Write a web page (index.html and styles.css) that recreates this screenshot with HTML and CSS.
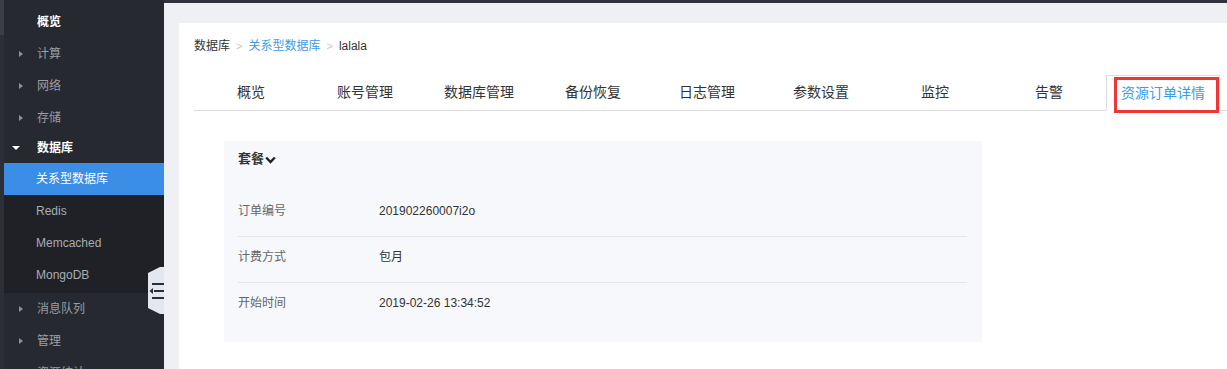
FILE: index.html
```html
<!DOCTYPE html>
<html lang="zh">
<head>
<meta charset="utf-8">
<title>资源订单详情</title>
<link rel="stylesheet" href="styles.css">
</head>
<body>
<div class="app">
  <aside class="sidebar">
    <div class="scroll"><div class="thumb"></div></div>
    <nav class="menu">
      <div class="item first bold">概览</div>
      <div class="item"><span class="tri-r"></span>计算</div>
      <div class="item"><span class="tri-r"></span>网络</div>
      <div class="item"><span class="tri-r"></span>存储</div>
      <div class="item open bold"><span class="tri-d"></span>数据库</div>
      <div class="submenu">
        <div class="sub active">关系型数据库</div>
        <div class="sub">Redis</div>
        <div class="sub">Memcached</div>
        <div class="sub">MongoDB</div>
      </div>
      <div class="item"><span class="tri-r"></span>消息队列</div>
      <div class="item"><span class="tri-r"></span>管理</div>
      <div class="item"><span class="tri-r"></span>资源统计</div>
      <div class="toggle">
        <svg width="16" height="47" viewBox="0 0 16 47">
          <polygon points="0,6 12,0 16,0 16,47 12,47 0,41" fill="#e3e7ef"/>
          <rect x="4" y="16" width="12" height="2" fill="#2b2e35"/>
          <rect x="6" y="23" width="10" height="2" fill="#2b2e35"/>
          <rect x="4" y="30" width="12" height="2" fill="#2b2e35"/>
          <polygon points="1.5,24 5,21 5,27" fill="#2b2e35"/>
        </svg>
      </div>
    </nav>
  </aside>
  <main class="main">
    <section class="card">
      <div class="crumbs">
        <span class="crumb">数据库</span>
        <span class="sep">&gt;</span>
        <span class="crumb link">关系型数据库</span>
        <span class="sep">&gt;</span>
        <span class="crumb">lalala</span>
      </div>
      <div class="tabs">
        <div class="tab">概览</div>
        <div class="tab">账号管理</div>
        <div class="tab">数据库管理</div>
        <div class="tab">备份恢复</div>
        <div class="tab">日志管理</div>
        <div class="tab">参数设置</div>
        <div class="tab">监控</div>
        <div class="tab">告警</div>
        <div class="tab active">资源订单详情<span class="mark"></span></div>
      </div>
      <div class="panel">
        <div class="panel-title">套餐<svg class="chev" width="11" height="8" viewBox="0 0 11 8"><polyline points="1.2,1.5 5.5,6 9.8,1.5" fill="none" stroke="#222" stroke-width="2.4"/></svg></div>
        <div class="row"><span class="label">订单编号</span><span class="value">201902260007i2o</span></div>
        <div class="row"><span class="label">计费方式</span><span class="value">包月</span></div>
        <div class="row last"><span class="label">开始时间</span><span class="value">2019-02-26 13:34:52</span></div>
      </div>
    </section>
  </main>
</div>
</body>
</html>
```

FILE: styles.css
```css
* { box-sizing: border-box; }
html, body {
  margin: 0;
  padding: 0;
  width: 1227px;
  height: 369px;
  overflow: hidden;
  font-family: "Liberation Sans", "Noto Sans CJK SC", sans-serif;
  font-size: 12px;
  color: #333;
}
.app {
  display: flex;
  height: 369px;
}
.sidebar {
  width: 164px;
  flex: none;
  display: flex;
  background: #26292f;
}
.scroll {
  width: 4px;
  flex: none;
  background: #2c2f36;
}
.thumb {
  height: 35px;
  background: #3a3d45;
}
.menu {
  flex: 1;
  position: relative;
  padding-top: 6px;
}
.item {
  position: relative;
  height: 32px;
  line-height: 32px;
  padding-left: 33px;
  color: #9b9ea4;
  white-space: nowrap;
}
.item.bold { color: #fff; font-weight: bold; }
.item.open { height: 29px; line-height: 29px; }
.tri-r {
  position: absolute;
  left: 15px;
  top: 13px;
  width: 0;
  height: 0;
  border-top: 3.5px solid transparent;
  border-bottom: 3.5px solid transparent;
  border-left: 4px solid #8d9096;
}
.tri-d {
  position: absolute;
  left: 8px;
  top: 12px;
  width: 0;
  height: 0;
  border-left: 4px solid transparent;
  border-right: 4px solid transparent;
  border-top: 4px solid #fff;
}
.submenu {
  background: #1f2126;
  padding-bottom: 2px;
}
.sub {
  height: 32px;
  line-height: 32px;
  padding-left: 32px;
  color: #a9acb2;
  white-space: nowrap;
}
.sub.active {
  background: #3a8ee6;
  color: #fff;
}
.toggle {
  position: absolute;
  left: 144px;
  top: 267px;
  width: 16px;
  height: 47px;
}
.toggle svg { display: block; }
.main {
  flex: 1;
  background: #eff0f4;
  border-top: 3px solid #2f323b;
  padding: 20px 0 0 15px;
  display: flex;
}
.card {
  flex: 1;
  background: #fff;
  padding: 14px 0 0 15px;
}
.crumbs {
  height: 18px;
  line-height: 18px;
  display: flex;
  gap: 6px;
  font-size: 12px;
}
.crumb { color: #333; }
.crumb.link { color: #3a9be8; }
.sep { color: #c4c7cd; font-size: 11px; }
.tabs {
  margin-top: 20px;
  display: flex;
  border-bottom: 1px solid #dcdcdc;
  height: 36px;
}
.tab {
  position: relative;
  width: 114px;
  flex: none;
  text-align: center;
  font-size: 14px;
  line-height: 35px;
  color: #333;
}
.tab.active {
  color: #3a9be8;
  border: 1px solid #dcdcdc;
  border-bottom: 1px solid #fff;
  height: 36px;
  line-height: 34px;
}
.mark {
  position: absolute;
  left: 7px;
  top: 1px;
  width: 105px;
  height: 36px;
  border: 3px solid #ef3535;
}
.panel {
  margin: 30px 0 0 30px;
  width: 758px;
  height: 201px;
  background: #f7f8fc;
  padding: 9px 15px 0 14px;
}
.panel-title {
  height: 18px;
  line-height: 18px;
  font-size: 13px;
  font-weight: bold;
  color: #333;
  display: flex;
  align-items: center;
  gap: 1px;
  margin-bottom: 23px;
}
.chev { display: block; margin-top: 1px; }
.row {
  display: flex;
  height: 46px;
  padding-top: 11px;
  line-height: 18px;
  border-bottom: 1px solid #e3e5ea;
  font-size: 12px;
}
.row.last { border-bottom: none; }
.label {
  width: 141px;
  flex: none;
  color: #666;
}
.value { color: #333; }
```
